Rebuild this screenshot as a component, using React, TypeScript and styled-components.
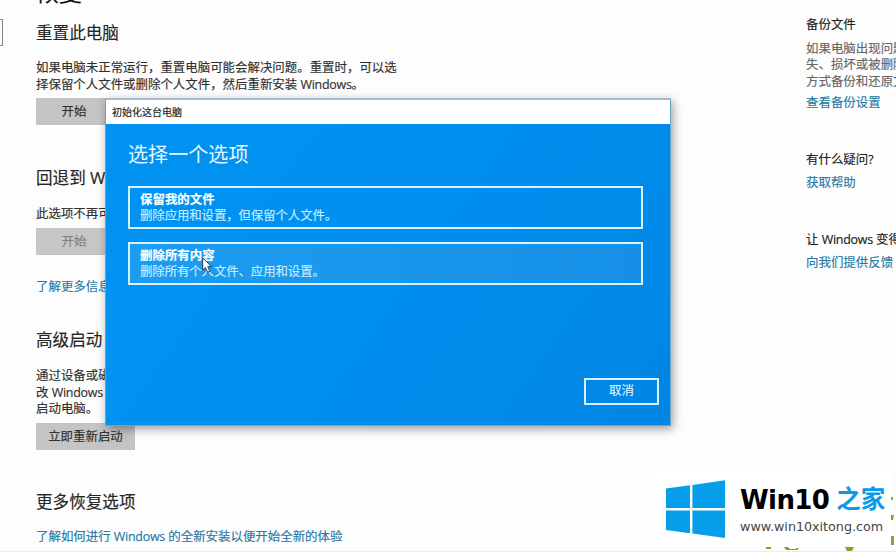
import React from 'react';
import styled, { createGlobalStyle } from 'styled-components';

const Global = createGlobalStyle`
  * { box-sizing: border-box; }
  body {
    margin: 0;
    overflow: hidden;
    background: #fdfdfd;
    font-family: 'Open Sans', 'Noto Sans CJK SC', sans-serif;
    font-size: 12.45px;
    line-height: 16.5px;
    color: #303030;
    -webkit-text-stroke: 0.15px currentColor;
  }
`;

const Page = styled.div`
  position: relative;
  display: grid;
  grid-template-columns: 36px 770px 1fr;
  width: 896px;
  height: 552px;
  overflow: hidden;
  background: #fdfdfd;
  border-bottom: 1px solid #e2f1f8;
`;

const Rail = styled.div`
  padding-top: 19px;
`;

const SearchEdge = styled.div`
  width: 3px;
  height: 27px;
  border: 1px solid #858585;
  border-left: 0;
`;

const Main = styled.main`
  display: flex;
  flex-direction: column;
  align-items: flex-start;
  margin-top: -23px;
  white-space: nowrap;
`;

const Title = styled.h1`
  margin: 0;
  height: 30px;
  font-size: 23px;
  line-height: 30px;
  font-weight: 400;
  color: #111;
`;

const Section = styled.section<{ $gap: number }>`
  margin-top: ${(p) => p.$gap}px;
`;

const Heading = styled.h2`
  margin: 0;
  height: 22px;
  font-size: 16.6px;
  line-height: 22px;
  font-weight: 400;
  color: #262626;
`;

const Para = styled.p<{ $gap?: number; $tone?: string }>`
  margin: ${(p) => p.$gap ?? 0}px 0 0;
  color: ${(p) => p.$tone ?? '#303030'};
`;

const Latin = styled.span`
  letter-spacing: -0.25px;
`;

const Link = styled.a<{ $gap: number }>`
  display: block;
  margin-top: ${(p) => p.$gap}px;
  color: #2779a4;
`;

const Button = styled.button<{ $gap: number; $muted?: boolean; $width: number }>`
  display: flex;
  align-items: center;
  justify-content: center;
  width: ${(p) => p.$width}px;
  height: 27px;
  margin-top: ${(p) => p.$gap}px;
  padding: 2px 0 0;
  border: 0;
  background: ${(p) => (p.$muted ? '#c6c6c6' : '#c4c4c4')};
  color: ${(p) => (p.$muted ? '#808080' : '#303030')};
  font: inherit;
`;

const Aside = styled.aside`
  padding-top: 17px;
  white-space: nowrap;
`;

const Dialog = styled.div`
  position: absolute;
  left: 105px;
  top: 98px;
  width: 566px;
  height: 328px;
  display: flex;
  flex-direction: column;
  border: 1px solid #6aa5ca;
  border-top: 2px solid #a3bccd;
  background: linear-gradient(125deg, #0093f3 0%, #008fef 50%, #0086e4 100%);
  box-shadow: 2px 3px 9px rgba(0, 0, 0, 0.38);
  color: #fff;
`;

const TitleBar = styled.div`
  height: 24px;
  padding-left: 6px;
  background: #fff;
  color: #222;
  font-size: 10px;
  line-height: 25px;
`;

const DialogBody = styled.div`
  flex: 1;
  display: flex;
  flex-direction: column;
  padding: 16px 27px 20px 22px;
`;

const DialogTitle = styled.h3`
  margin: 0 0 17px;
  font-size: 20.1px;
  line-height: 29px;
  font-weight: 400;
  color: #e6f8ff;
  -webkit-text-stroke: 0;
`;

const Option = styled.div<{ $hover?: boolean }>`
  height: 43px;
  margin-bottom: 13px;
  padding: 4px 10px;
  border: 2px solid #d5f3ff;
  background: ${(p) => (p.$hover ? 'linear-gradient(90deg, #1c9df2, #1590e6)' : 'transparent')};
  line-height: 16px;
  color: #c8ecff;
`;

const OptionName = styled.strong`
  display: block;
  font-weight: 700;
  color: #fff;
`;

const OptionText = styled.span`
  letter-spacing: -0.12px;
`;

const Cancel = styled.button`
  align-self: flex-end;
  width: 75px;
  height: 27px;
  margin: auto -16px 0 0;
  padding: 0;
  border: 2px solid #d5f3ff;
  background: transparent;
  color: #d9f3ff;
  font: inherit;
`;

const Pointer = styled.svg`
  position: absolute;
  left: 202px;
  top: 257px;
`;

const Watermark = styled.div`
  position: absolute;
  left: 656px;
  top: 470px;
  width: 235px;
  height: 77px;
  display: flex;
  padding: 10px 0 0 10px;
  gap: 14px;
  background: #fff;
  white-space: nowrap;
  -webkit-text-stroke: 0;
`;

const Brand = styled.div`
  display: flex;
  align-items: center;
  gap: 7px;
  height: 36px;
  margin-top: 2px;
  font-family: 'DejaVu Sans', 'Noto Sans CJK SC', sans-serif;
  font-size: 26px;
  font-weight: 700;
  letter-spacing: -0.6px;
  line-height: 36px;
  color: #000;
`;

const BrandAccent = styled.span`
  font-size: 24.5px;
  letter-spacing: 0;
  color: #0a9be8;
`;

const Site = styled.div`
  font-family: 'DejaVu Sans', sans-serif;
  font-size: 12.7px;
  line-height: 18px;
  color: #444;
`;

const Fragments = styled.svg`
  position: absolute;
  left: 756px;
  top: 492px;
`;

export default function App() {
  return (
    <>
      <Global />
      <Page>
        <Rail>
          <SearchEdge />
        </Rail>
        <Main>
          <Title>恢复</Title>
          <Section $gap={15}>
            <Heading>重置此电脑</Heading>
            <Para $gap={16}>
              如果电脑未正常运行，重置电脑可能会解决问题。重置时，可以选
              <br />
              择保留个人文件或删除个人文件，然后重新安装 <Latin>Windows</Latin>。
            </Para>
            <Button $gap={5} $width={76}>开始</Button>
          </Section>
          <Section $gap={42}>
            <Heading>回退到 W</Heading>
            <Para $gap={17}>此选项不再可</Para>
            <Button $gap={5} $width={76} $muted>开始</Button>
            <Link $gap={24}>了解更多信息</Link>
          </Section>
          <Section $gap={34}>
            <Heading>高级启动</Heading>
            <Para $gap={17}>
              通过设备或磁
              <br />
              改 <Latin>Windows</Latin>
              <br />
              启动电脑。
            </Para>
            <Button $gap={5} $width={99}>立即重新启动</Button>
          </Section>
          <Section $gap={41}>
            <Heading>更多恢复选项</Heading>
            <Link $gap={16}>
              了解如何进行 <Latin>Windows</Latin> 的全新安装以便开始全新的体验
            </Link>
          </Section>
        </Main>
        <Aside>
          <Para $tone="#202020">备份文件</Para>
          <Para $gap={7} $tone="#666">
            如果电脑出现问题
            <br />
            失、损坏或被删除
            <br />
            方式备份和还原文
          </Para>
          <Link $gap={5}>查看备份设置</Link>
          <Para $gap={40} $tone="#202020">有什么疑问?</Para>
          <Link $gap={7}>获取帮助</Link>
          <Para $gap={40} $tone="#202020">
            让 <Latin>Windows</Latin> 变得
          </Para>
          <Link $gap={7}>向我们提供反馈</Link>
        </Aside>

        <Dialog>
          <TitleBar>初始化这台电脑</TitleBar>
          <DialogBody>
            <DialogTitle>选择一个选项</DialogTitle>
            <Option>
              <OptionName>保留我的文件</OptionName>
              <OptionText>删除应用和设置，但保留个人文件。</OptionText>
            </Option>
            <Option $hover>
              <OptionName>删除所有内容</OptionName>
              <OptionText>删除所有个人文件、应用和设置。</OptionText>
            </Option>
            <Cancel>取消</Cancel>
          </DialogBody>
        </Dialog>

        <Pointer width="11" height="17" viewBox="0 0 11 17">
          <path d="M0.7 0.8V13l2.7-2.5 2.1 4.8 2.3-1-2-4.6h3.7z" fill="#fff" stroke="#263d58" strokeWidth="1" />
        </Pointer>

        <Fragments width="140" height="60" viewBox="0 0 140 60">
          <path d="M135 5h2v3h-2zM135 23h3l-1 5h-2zM135 44h3v9h-3z" fill="#7fa932" />
          <path d="M10 55h5v2h-5zM28 55h4l2 2h6v-1h3l-2 2H30zM89 55h9l-2 4h-5z" fill="#87a51c" />
        </Fragments>
        <Watermark>
          <svg width="60" height="59" viewBox="0 0 60 59">
            <path d="M0 8.6 24 5.2V28H0zM26.4 4.9 59 .3V28H26.4zM0 30.4h24v22.8L0 50zM26.4 30.4H59V58l-32.6-4.5z" fill="#059fe9" />
          </svg>
          <div>
            <Brand>
              Win10<BrandAccent>之家</BrandAccent>
            </Brand>
            <Site>www.win10xitong.com</Site>
          </div>
        </Watermark>
      </Page>
    </>
  );
}
